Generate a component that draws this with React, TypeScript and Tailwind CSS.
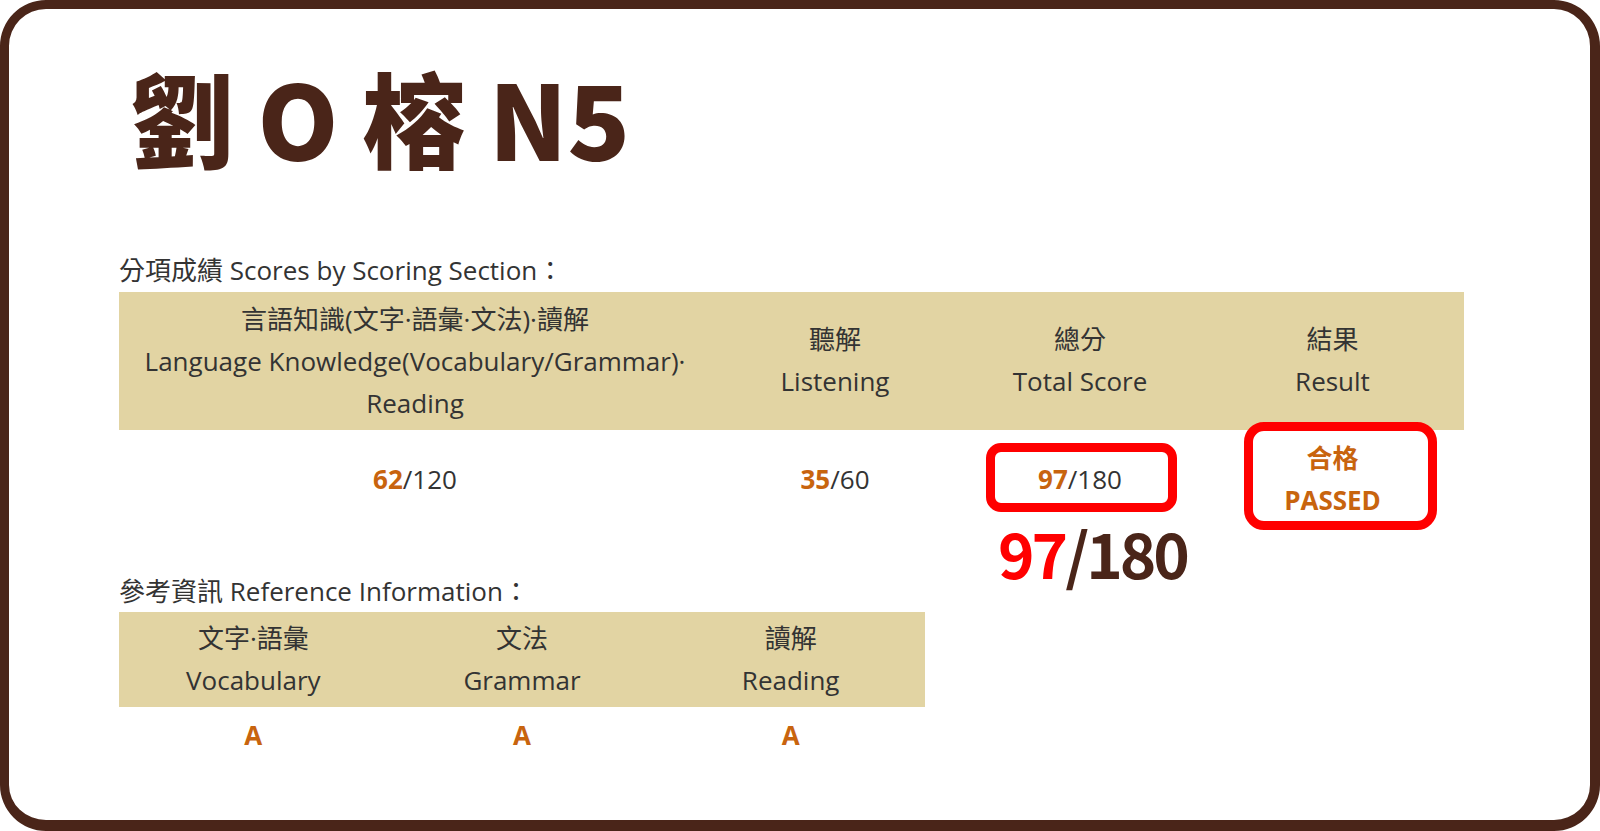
const brown = "text-[#4a2519]";

function Score({ got, total }: { got: string; total: string }) {
    return (
        <span>
            <span className="font-bold text-[#c8640e]">{got}</span>
            <span>/{total}</span>
        </span>
    );
}

export default function App() {
    return (
        <div className="w-[1600px] h-[831px] bg-white">
            <div className="relative h-full rounded-[46px] border-[9px] border-r-[10px] border-b-[11px] border-[#4a2519] bg-white pl-[110px] pt-[56px] font-['Open_Sans','Noto_Sans_CJK_TC',sans-serif] text-[#333]">
                {/* 이름 + 급수 */}
                <h1 className={`h-[108px] pl-[12px] text-[103px] leading-none font-black font-['Noto_Sans_CJK_TC',sans-serif] ${brown}`}>
                    劉 O 榕 N5
                </h1>

                {/* 분항 성적 */}
                <p className="mt-[79px] text-[26px] leading-[36px]">分項成績 Scores by Scoring Section：</p>
                <div className="mt-[4px] w-[1345px] text-[26px] leading-[42px] text-center">
                    <div className="grid h-[138px] grid-cols-[592px_248px_242px_263px] bg-[#e2d4a3]">
                        <div className="flex flex-col justify-center">
                            <span>言語知識(文字·語彙·文法)·讀解</span>
                            <span>Language Knowledge(Vocabulary/Grammar)·</span>
                            <span>Reading</span>
                        </div>
                        <div className="flex flex-col justify-center pb-[2px]">
                            <span>聽解</span>
                            <span>Listening</span>
                        </div>
                        <div className="flex flex-col justify-center pb-[2px]">
                            <span>總分</span>
                            <span>Total Score</span>
                        </div>
                        <div className="flex flex-col justify-center pb-[2px]">
                            <span>結果</span>
                            <span>Result</span>
                        </div>
                    </div>
                    <div className="grid h-[98px] grid-cols-[592px_248px_242px_263px] items-center">
                        <Score got="62" total="120" />
                        <Score got="35" total="60" />
                        <Score got="97" total="180" />
                        <div className="flex flex-col font-bold text-[#c8640e]">
                            <span>合格</span>
                            <span>PASSED</span>
                        </div>
                    </div>
                </div>

                {/* 참고 정보 */}
                <p className="mt-[45px] text-[26px] leading-[36px]">參考資訊 Reference Information：</p>
                <div className="mt-[3px] w-[806px] text-[26px] leading-[42px] text-center">
                    <div className="grid h-[95px] grid-cols-3 content-center bg-[#e2d4a3] pb-[1px]">
                        <div className="flex flex-col">
                            <span>文字·語彙</span>
                            <span>Vocabulary</span>
                        </div>
                        <div className="flex flex-col">
                            <span>文法</span>
                            <span>Grammar</span>
                        </div>
                        <div className="flex flex-col">
                            <span>讀解</span>
                            <span>Reading</span>
                        </div>
                    </div>
                    <div className="grid h-[56px] grid-cols-3 items-center font-bold text-[#c8640e]">
                        <span>A</span>
                        <span>A</span>
                        <span>A</span>
                    </div>
                </div>

                {/* 빨간 표시 */}
                <div className="absolute left-[977px] top-[434px] h-[69px] w-[191px] rounded-[15px] border-[9px] border-[#ff0000]" />
                <div className="absolute left-[1235px] top-[413px] h-[108px] w-[193px] rounded-[20px] border-[9px] border-[#ff0000]" />
                <div className="absolute left-[989px] top-[512px] text-[62px] leading-none tracking-[-3px] font-bold font-['Noto_Sans_CJK_TC',sans-serif]">
                    <span className="text-[#ff0000]">97</span>
                    <span className="text-[#4a2519]">/180</span>
                </div>
            </div>
        </div>
    );
}
